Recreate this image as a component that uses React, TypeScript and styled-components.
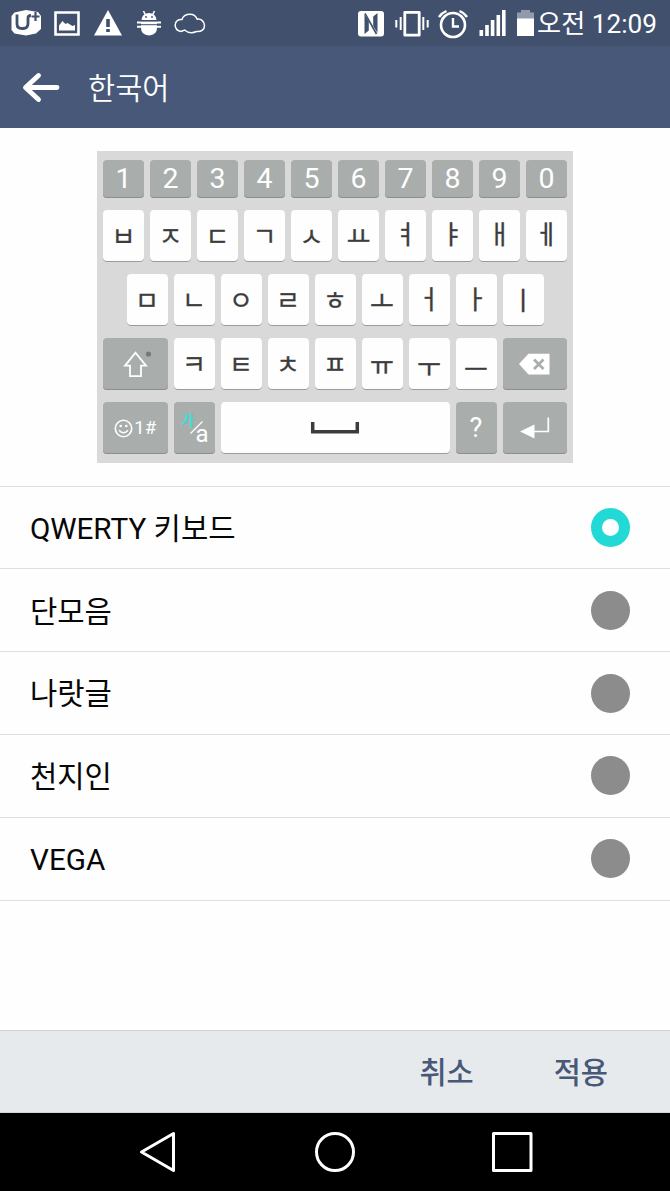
import React, { useState } from "react";
import styled, { createGlobalStyle } from "styled-components";

const GlobalStyle = createGlobalStyle`
  *, *::before, *::after { box-sizing: border-box; }
  body {
    margin: 0;
    background: #fefefe;
    font-family: Roboto, "Noto Sans CJK KR", sans-serif;
  }
  button { font: inherit; border: 0; padding: 0; background: none; color: inherit; }
  svg { display: block; flex: none; }
`;

const Screen = styled.div`
  width: 670px;
  height: 1191px;
  display: flex;
  flex-direction: column;
  overflow: hidden;
  background: #fefefe;
`;

const StatusBar = styled.div`
  flex: none;
  height: 46px;
  display: flex;
  justify-content: space-between;
  padding: 0 13px 0 11px;
  background: #40506d;
  color: #fff;
`;

const IconGroup = styled.div<{ $gap: number }>`
  display: flex;
  gap: ${(p) => p.$gap}px;
`;

const Clock = styled.span`
  margin-left: -5px;
  padding-top: 1px;
  line-height: 46px;
  font-size: 26.2px;
  white-space: nowrap;
`;

const TitleBar = styled.header`
  flex: none;
  height: 82px;
  display: flex;
  align-items: center;
  gap: 28px;
  padding-left: 22px;
  background: #475878;
  color: #fff;
`;

const Title = styled.h1`
  margin: 0;
  padding-top: 3px;
  font-size: 29.5px;
  line-height: 40px;
  font-weight: 350;
`;

const Preview = styled.section`
  flex: none;
  height: 357.6px;
  display: flex;
  justify-content: center;
  padding-top: 23px;
`;

const Keyboard = styled.div`
  width: 476px;
  height: 312px;
  display: flex;
  flex-direction: column;
  align-items: center;
  gap: 12px;
  padding-top: 9px;
  background: #d9d9d9;
`;

const KeyRow = styled.div`
  display: flex;
  gap: 6px;
`;

const Key = styled.div<{ $width?: number; $gray?: boolean; $short?: boolean }>`
  width: ${(p) => p.$width ?? 41}px;
  height: ${(p) => (p.$short ? 38 : 52)}px;
  display: flex;
  align-items: center;
  justify-content: center;
  border-radius: 4px;
  background: ${(p) => (p.$gray ? "#a9aeac" : "#fefefe")};
  box-shadow: inset 0 -1px 0 ${(p) => (p.$gray ? "#8b8f8e" : "#9b9b9b")};
  color: ${(p) => (p.$gray ? "#fff" : "#3c3c3c")};
`;

const Digit = styled.span`
  font-size: 28.5px;
  line-height: 38px;
`;

const Jamo = styled.span<{ $lift: number }>`
  font-family: "Noto Sans CJK KR", sans-serif;
  font-size: 26px;
  line-height: 52px;
  -webkit-text-stroke: 0.3px currentColor;
  transform: translateY(${(p) => -p.$lift}px);
`;

const SymbolLabel = styled.span`
  padding-left: 1px;
  font-size: 18.5px;
  line-height: 52px;
`;

const QuestionLabel = styled.span`
  font-size: 27px;
  line-height: 52px;
`;

const LanguageLabel = styled.div`
  position: relative;
  width: 41px;
  height: 52px;
`;

const Hangul = styled.span`
  position: absolute;
  left: 7px;
  top: 9px;
  font-size: 15px;
  line-height: 20px;
  font-weight: 700;
  color: #3fdcd6;
`;

const Latin = styled.span`
  position: absolute;
  left: 22px;
  top: 19px;
  font-size: 24px;
  line-height: 26px;
`;

const Slash = styled.svg`
  position: absolute;
  left: 0;
  top: 0;
`;

const Options = styled.ul`
  flex: 1;
  margin: 0;
  padding: 0;
  list-style: none;
`;

const Option = styled.li`
  height: 82.8px;
  display: flex;
  align-items: center;
  justify-content: space-between;
  padding: 0 40px 0 30px;
  border-top: 1px solid #dfdfdf;
  color: #070707;

  &:last-child {
    height: 83.8px;
    border-bottom: 1px solid #dfdfdf;
  }
`;

const OptionName = styled.span`
  padding-top: 2.6px;
  font-size: 29.7px;
  line-height: 40px;
`;

const Radio = styled.span<{ $on: boolean }>`
  width: 39px;
  height: 39px;
  border-radius: 50%;
  border: ${(p) => (p.$on ? "11.5px solid #21dad5" : "0")};
  background: ${(p) => (p.$on ? "#fff" : "#8c8c8c")};
`;

const Footer = styled.footer`
  flex: none;
  height: 83px;
  display: flex;
  align-items: center;
  justify-content: flex-end;
  gap: 80px;
  padding: 2px 62px 0 0;
  background: #e7eaed;
  border-top: 1px solid #cfd2d4;
  border-bottom: 1px solid #d3d6d9;
  color: #475878;
`;

const Action = styled.button`
  font-size: 29.5px;
  font-weight: 500;
  line-height: 40px;
`;

const NavBar = styled.nav`
  flex: none;
  height: 78px;
  display: flex;
  padding-left: 138px;
  background: #000;
`;

const digits = ["1", "2", "3", "4", "5", "6", "7", "8", "9", "0"];
const rowOne = ["ㅂ", "ㅈ", "ㄷ", "ㄱ", "ㅅ", "ㅛ", "ㅕ", "ㅑ", "ㅐ", "ㅔ"];
const rowTwo = ["ㅁ", "ㄴ", "ㅇ", "ㄹ", "ㅎ", "ㅗ", "ㅓ", "ㅏ", "ㅣ"];
const rowThree = ["ㅋ", "ㅌ", "ㅊ", "ㅍ", "ㅠ", "ㅜ", "ㅡ"];
const layouts = ["QWERTY 키보드", "단모음", "나랏글", "천지인", "VEGA"];

// Upward shift that centres each vowel on its key; consonants share one value.
const vowelLift: Record<string, number> = {
  ㅛ: 1.5, ㅕ: 3, ㅑ: 3, ㅐ: 3, ㅔ: 3,
  ㅗ: 0, ㅓ: 2, ㅏ: 2, ㅣ: 1.5,
  ㅠ: 0, ㅜ: -2, ㅡ: -4,
};

const JamoKeys = ({ letters }: { letters: string[] }) => (
  <>
    {letters.map((letter) => (
      <Key key={letter}>
        <Jamo $lift={vowelLift[letter] ?? 1.5}>{letter}</Jamo>
      </Key>
    ))}
  </>
);

const NotificationIcons = () => (
  <IconGroup $gap={13}>
    <svg width="30" height="46" viewBox="11 0 30 46">
      <path d="M14.500 12.500 26 10 38 12 41 16V29L36 33.500 26 35.500 14.500 33.500 11.500 30V16Z" fill="#fff" />
      <path d="M17 14.500V24q0 4.500 5 4.500h1q5 0 5-5V18q0-2.500 3-2.500" fill="none" stroke="#40506d" strokeWidth="2.800" />
      <path d="M35.500 12v9M31.500 16.500h8" stroke="#40506d" strokeWidth="2.200" />
    </svg>
    <svg width="27" height="46" viewBox="54 0 27 46">
      <path d="M55.500 12.500h23v22h-23z" fill="none" stroke="#fff" strokeWidth="2.600" />
      <path d="M59 30.500v-5l3.500-4.500 3 3 2-1 5 3 2.500-1v5.500z" fill="#fff" />
    </svg>
    <svg width="29" height="46" viewBox="94 0 29 46">
      <path d="M108 10 122 35.500H94Z" fill="#fff" />
      <path d="M106.200 19h3.600v8h-3.600zM106.200 29h3.600v3h-3.600z" fill="#40506d" />
    </svg>
    <svg width="25" height="46" viewBox="136 0 25 46">
      <path d="M141.500 20a7.500 7 0 0 1 15 0ZM137 21.500h24v2h-24zM137 25.800h24v2h-24zM141 22h16v6q0 7-8 7.500-8-.5-8-7.500z" fill="#fff" />
      <path d="m143.500 11 2 4M154.500 11l-2 4" stroke="#fff" strokeWidth="1.600" />
      <path d="M140.500 20.700h17M140.500 24.700h17" stroke="#40506d" strokeWidth="1" />
      <circle cx="146" cy="17" r=".9" fill="#40506d" />
      <circle cx="152" cy="17" r=".9" fill="#40506d" />
    </svg>
    <svg width="32" height="46" viewBox="174 0 32 46">
      <path d="M181 31.500C177 30.500 175 28 175.200 24.700 175.400 21 178.500 19 182 19.500 183 16 186 14.300 190 14.300S196 16.500 197.200 19.200C201 18.500 204.500 21.500 204.500 25.500S201.500 32 196.500 31.500C192 33.500 188 33 184.500 30L181 31.500" fill="none" stroke="#fff" strokeWidth="1.500" />
    </svg>
  </IconGroup>
);

const SystemIcons = () => (
  <IconGroup $gap={8}>
    <svg width="29" height="46" viewBox="358 0 29 46">
      <rect x="358" y="11" width="26" height="25.500" rx="3" fill="#fff" />
      <path d="M364.500 14 368.800 21.500V30.500L364.500 34ZM377.500 33 373.200 26V16.500L377.500 13Z" fill="#40506d" />
      <path d="M365 13.500 376.500 34" stroke="#40506d" strokeWidth="1.600" />
    </svg>
    <svg width="34.500" height="46" viewBox="395 0 34.500 46">
      <path d="M404.800 12.300h14.400v22.900h-14.400z" fill="none" stroke="#fff" strokeWidth="2.800" strokeLinejoin="round" />
      <path d="M400.700 17v13M423.300 17v13M396.300 20v7.500M427.700 20v7.500" stroke="#fff" strokeWidth="2" />
    </svg>
    <svg width="33" height="46" viewBox="437.500 0 33 46">
      <circle cx="452.500" cy="25" r="12" fill="none" stroke="#fff" strokeWidth="2.600" />
      <path d="M452.500 18v8.500h6M438.500 17q2.500-4 7.500-6M466.500 17q-2.500-4-7.500-6" fill="none" stroke="#fff" strokeWidth="2.400" />
    </svg>
    <svg width="30.500" height="46" viewBox="478.500 0 30.500 46">
      <path d="M479 30h3.600v6H479zM484.700 25h3.600v11h-3.600zM490.300 20h3.600v16h-3.600zM496 15h3.600v21H496zM501.500 10h3.600v26h-3.600z" fill="#fff" />
    </svg>
    <svg width="17" height="46" viewBox="517 0 17 46">
      <path d="M517 19v-6.500h4V10h9v2.500h4V19z" fill="#929bad" />
      <path d="M517 18.500h17V36h-17z" fill="#fff" />
    </svg>
    <Clock>오전 12:09</Clock>
  </IconGroup>
);

const BackArrow = () => (
  <svg width="38" height="34" viewBox="22 70 38 34">
    <path d="M38.500 75.500 25.500 87.500l13 12M26 87.500h31" fill="none" stroke="#fff" strokeWidth="4.900" strokeLinecap="round" strokeLinejoin="round" />
  </svg>
);

const ShiftIcon = () => (
  <svg width="64" height="52" viewBox="103 338 64 52">
    <path d="M135.500 352.800 146 365.700h-5v10.500h-11v-10.500h-5Z" fill="none" stroke="#fff" strokeWidth="1.800" />
    <circle cx="148.500" cy="354" r="2.600" fill="#757977" />
  </svg>
);

const BackspaceIcon = () => (
  <svg width="64" height="52" viewBox="503 338 64 52">
    <path d="M519 364 528.500 353.700h21v20.700h-21Z" fill="#fff" />
    <path d="m534 359.500 9.500 9.500M543.500 359.500l-9.500 9.500" stroke="#a9aeac" strokeWidth="2.800" />
  </svg>
);

const SmileIcon = () => (
  <svg width="19" height="19" viewBox="0 0 19 19">
    <circle cx="9.500" cy="9.500" r="8.200" fill="none" stroke="#fff" strokeWidth="1.600" />
    <circle cx="6.700" cy="7" r="1.300" fill="#fff" />
    <circle cx="12.300" cy="7" r="1.300" fill="#fff" />
    <path d="M5 11.200q4.500 5 9 0" fill="none" stroke="#fff" strokeWidth="1.500" />
  </svg>
);

const SpaceIcon = () => (
  <svg width="50" height="52" viewBox="310 402 50 52">
    <path d="M312.700 422v9.800h44.600V422" fill="none" stroke="#3c3c3c" strokeWidth="3.500" />
  </svg>
);

const EnterIcon = () => (
  <svg width="64" height="52" viewBox="503 402 64 52">
    <path d="M520 431.500 534.500 424.500v14Z" fill="#fff" />
    <path d="M534 431.500h14.300V417.500" fill="none" stroke="#fff" strokeWidth="1.700" />
  </svg>
);

export default function App() {
  const [selected, setSelected] = useState(0);

  return (
    <>
      <GlobalStyle />
      <Screen>
        <StatusBar>
          <NotificationIcons />
          <SystemIcons />
        </StatusBar>
        <TitleBar>
          <BackArrow />
          <Title>한국어</Title>
        </TitleBar>
        <Preview>
          <Keyboard>
            <KeyRow>
              {digits.map((digit) => (
                <Key key={digit} $gray $short>
                  <Digit>{digit}</Digit>
                </Key>
              ))}
            </KeyRow>
            <KeyRow>
              <JamoKeys letters={rowOne} />
            </KeyRow>
            <KeyRow>
              <JamoKeys letters={rowTwo} />
            </KeyRow>
            <KeyRow>
              <Key $gray $width={64.5}>
                <ShiftIcon />
              </Key>
              <JamoKeys letters={rowThree} />
              <Key $gray $width={64.5}>
                <BackspaceIcon />
              </Key>
            </KeyRow>
            <KeyRow>
              <Key $gray $width={64.5}>
                <SmileIcon />
                <SymbolLabel>1#</SymbolLabel>
              </Key>
              <Key $gray>
                <LanguageLabel>
                  <Hangul>가</Hangul>
                  <Slash width="41" height="52" viewBox="0 0 41 52">
                    <path d="M16.500 31.500 28.500 19.500" stroke="#fff" strokeWidth="1.300" />
                  </Slash>
                  <Latin>a</Latin>
                </LanguageLabel>
              </Key>
              <Key $width={229}>
                <SpaceIcon />
              </Key>
              <Key $gray>
                <QuestionLabel>?</QuestionLabel>
              </Key>
              <Key $gray $width={64.5}>
                <EnterIcon />
              </Key>
            </KeyRow>
          </Keyboard>
        </Preview>
        <Options>
          {layouts.map((name, index) => (
            <Option key={name} onClick={() => setSelected(index)}>
              <OptionName>{name}</OptionName>
              <Radio $on={index === selected} />
            </Option>
          ))}
        </Options>
        <Footer>
          <Action>취소</Action>
          <Action>적용</Action>
        </Footer>
        <NavBar>
          <svg width="396" height="78" viewBox="138 1113 396 78" fill="none" stroke="#fff" strokeWidth="3" strokeLinejoin="round">
            <path d="M141.500 1152 173.500 1133.500v37Z" />
            <circle cx="335" cy="1152" r="18.500" />
            <path d="M493.500 1133.500h37.500v37h-37.500z" />
          </svg>
        </NavBar>
      </Screen>
    </>
  );
}
